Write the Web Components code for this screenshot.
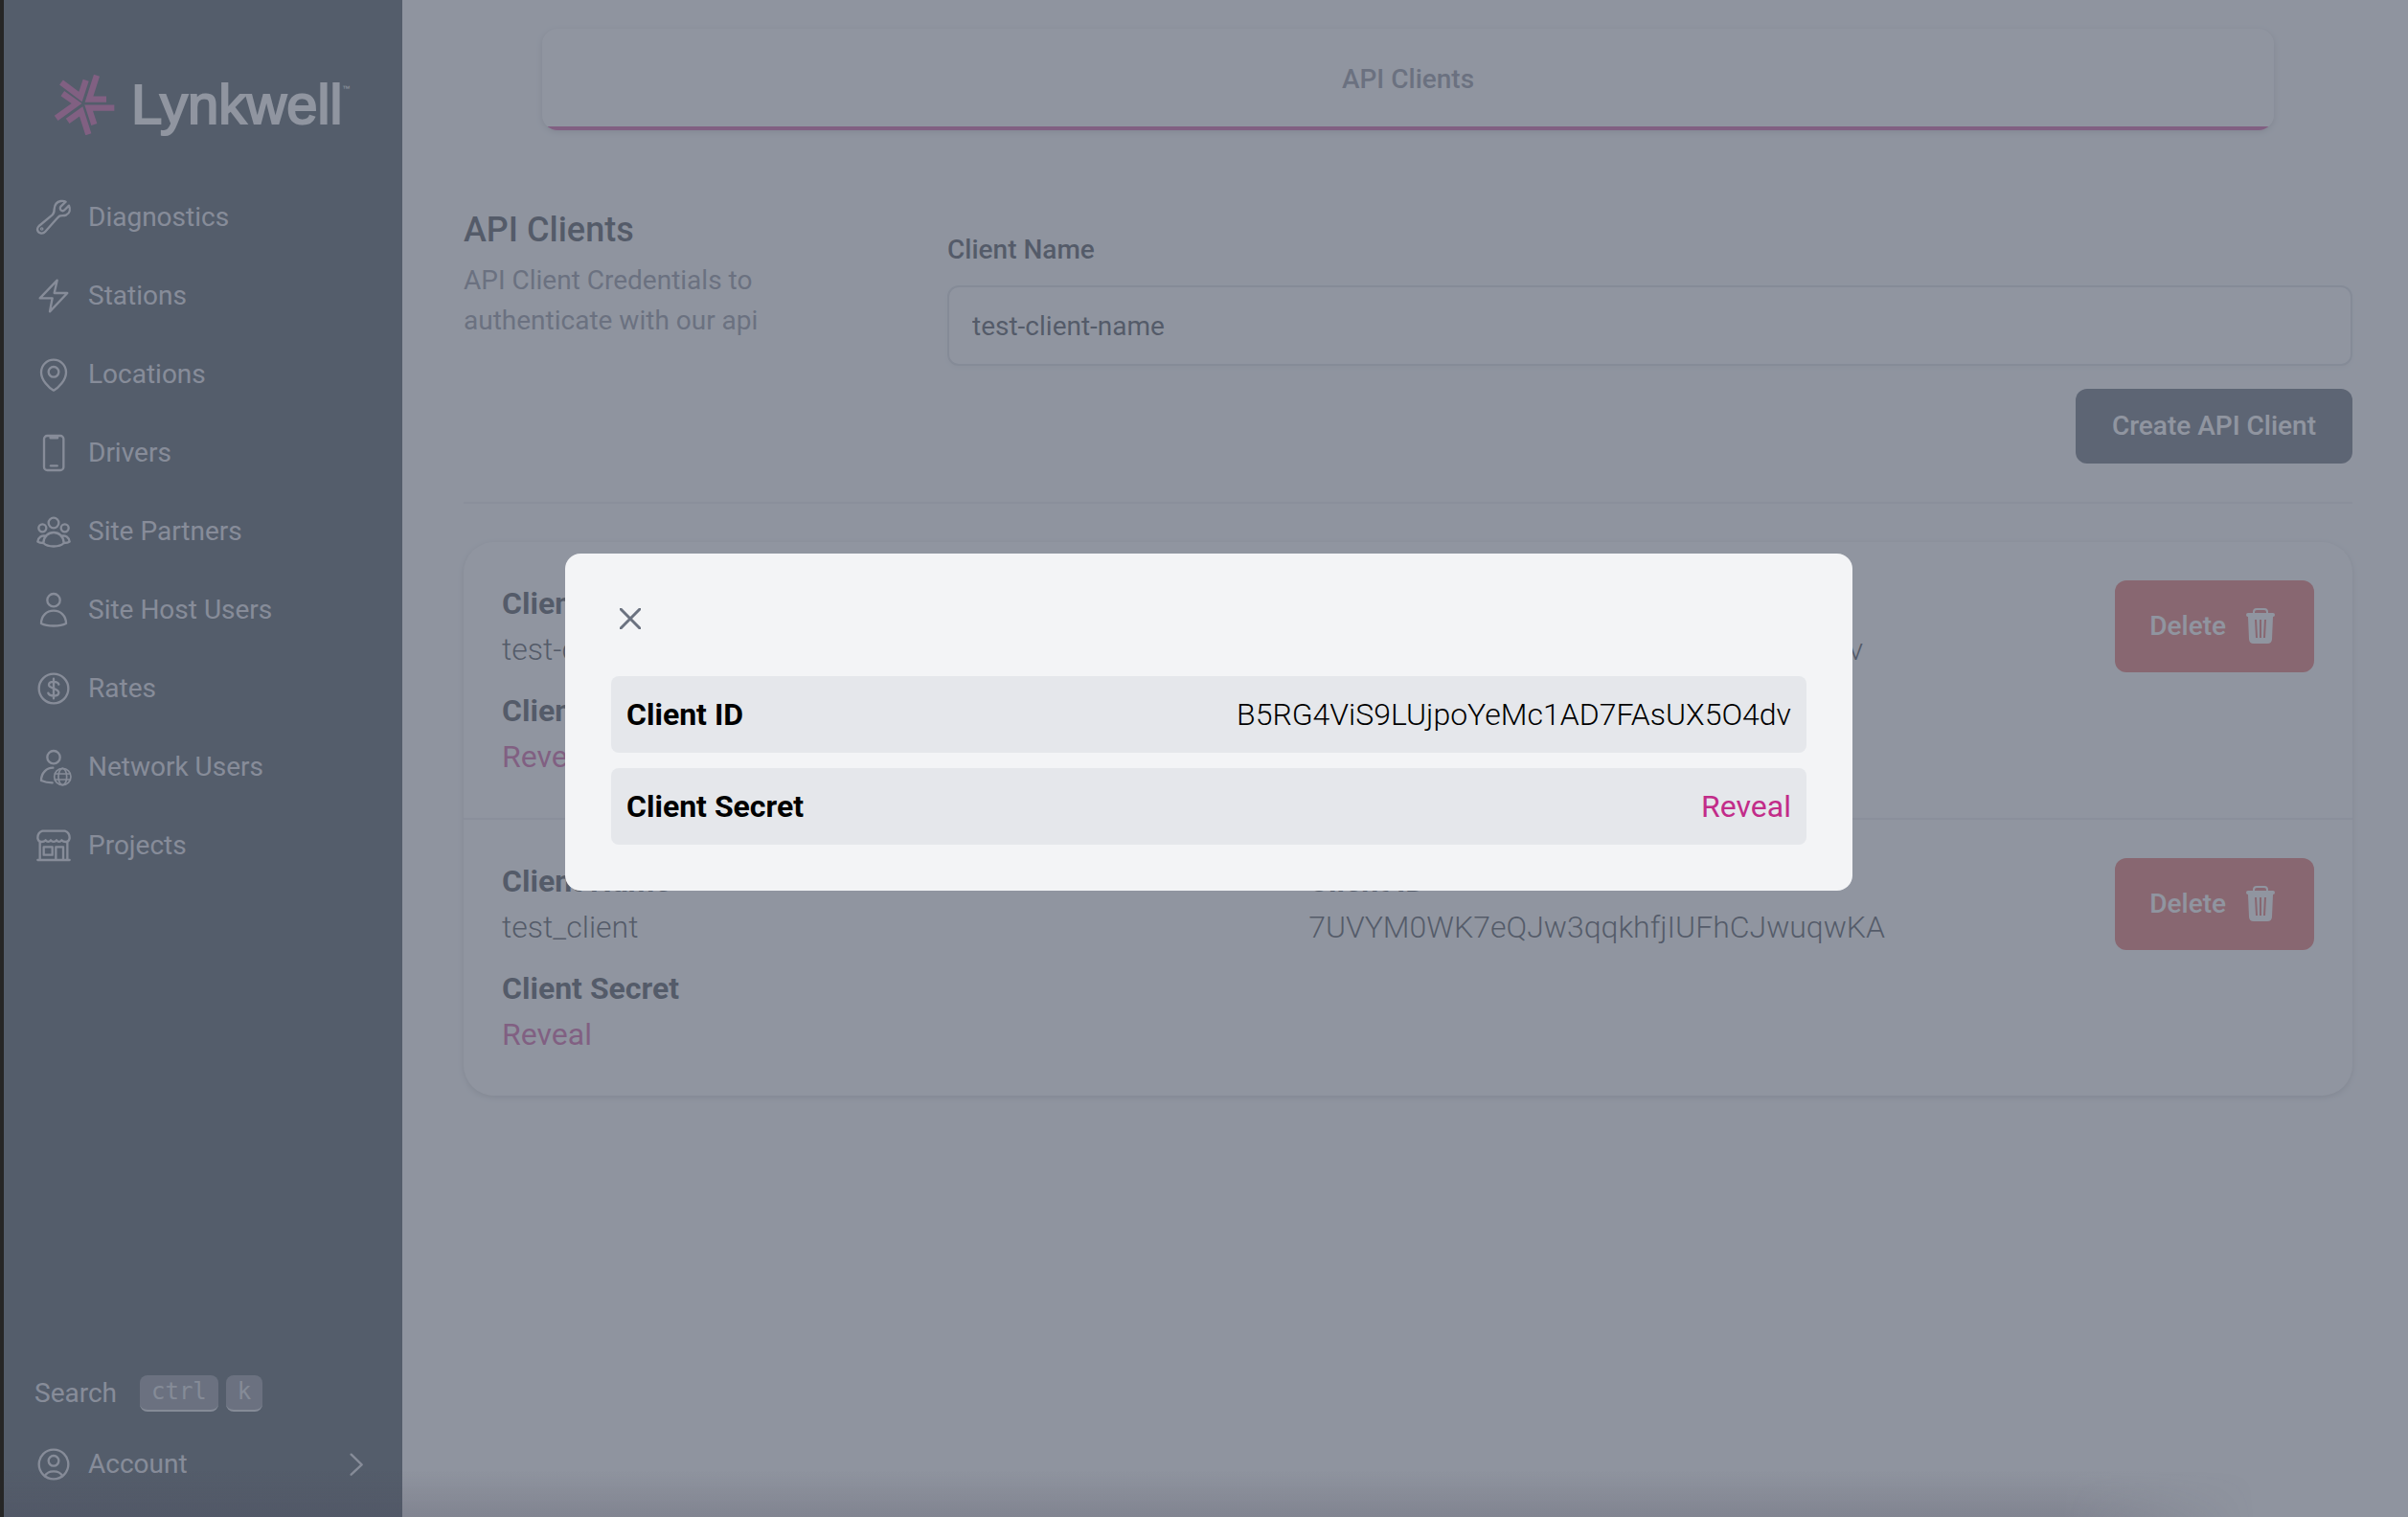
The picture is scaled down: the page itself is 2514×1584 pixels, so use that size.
<!DOCTYPE html>
<html lang="en">
<head>
<meta charset="utf-8">
<title>API Clients</title>
<style>
  html, body {
    margin: 0;
    height: 100%;
  }
  body {
    --ink: #111827;
    --muted: #6b7280;
    --pink: #c22c89;
    font-family: Roboto, "Noto Sans", sans-serif;
    font-size: 28px;
    line-height: 42px;
    color: var(--ink);
  }
</style>
</head>
<body>
<app-shell>
  <side-nav slot="nav"></side-nav>
  <tab-bar>API Clients</tab-bar>
  <client-form></client-form>
  <client-list>
    <client-row name="test-client-name" client-id="B5RG4ViS9LUjpoYeMc1AD7FAsUX5O4dv"></client-row>
    <client-row name="test_client" client-id="7UVYM0WK7eQJw3qqkhfjIUFhCJwuqwKA"></client-row>
  </client-list>
  <modal-dialog slot="overlay">
    <detail-row label="Client ID">B5RG4ViS9LUjpoYeMc1AD7FAsUX5O4dv</detail-row>
    <detail-row label="Client Secret"><reveal-button></reveal-button></detail-row>
  </modal-dialog>
</app-shell>

<script>
function define(name, html, setup) {
  const tmpl = document.createElement('template');
  tmpl.innerHTML = html;
  window.customElements.define(name, class extends HTMLElement {
    constructor() {
      super();
      this.attachShadow({mode: 'open'}).appendChild(tmpl.content.cloneNode(true));
    }
    connectedCallback() {
      if (setup) setup(this, this.shadowRoot);
    }
  });
}

// all icons share a 120 unit grid
const icons = {
  wrench: '<path d="M14 87 56 52C62 47 62 41 62 34 63 20 70 11 82 9 88 8 93 8 98 11L83 25C79 29 80 36 84 38 88 41 92 39 95 36L108 23C113 34 111 46 100 52 92 56 84 53 78 56 75 58 73 60 70 64L34 104C26 114 9 110 9 97 9 92 11 90 14 87Z"/><circle cx="23" cy="96" r="2"/>',
  bolt: '<path d="M71 11 17 67H56L48 109 103 51H62Z"/>',
  pin: '<path d="M60 110C45 102 21 78 21 53a39 39 0 0 1 78 0C99 78 75 102 60 110Z"/><circle cx="60" cy="52" r="16"/>',
  phone: '<rect x="30" y="6" width="61" height="108" rx="10"/><path d="M50 7h22v6h-22z"/><path d="M51 100h20"/>',
  partners: '<circle cx="60" cy="33" r="16"/><circle cx="25" cy="49" r="12"/><circle cx="95" cy="49" r="12"/><path d="M28 96C29 75 43 63 60 63S91 75 92 96C78 110 42 110 28 96ZM37 74C23 70 11 79 10 92 14 95 20 96 28 96M83 74C97 70 109 79 110 92 106 95 100 96 92 96"/>',
  user: '<circle cx="60" cy="29" r="20"/><path d="M21 102C21 78 38 62 60 62s39 16 39 40C80 112 40 112 21 102Z"/>',
  dollar: '<circle cx="60" cy="60" r="46"/><path d="M60 29v62M76 47C73 37 46 35 45 48 45 61 76 58 76 73 75 86 46 85 43 74"/>',
  network: '<circle cx="60" cy="29" r="20"/><path d="M58 62C38 62 21 78 21 102 32 107 44 109 56 109"/><g stroke-width="5"><circle cx="88" cy="90" r="26"/><ellipse cx="88" cy="90" rx="13" ry="26"/><path d="M64 81h48M64 99h48"/></g>',
  store: '<path d="M25 14H95C105 17 110 26 110 36 109 44 105 48 98 48 91 48 87 45 85 43 81 49 73 49 69 43 65 49 55 49 51 43 47 49 39 49 35 43 33 45 29 48 22 48 15 48 11 44 10 36 10 26 15 17 25 14ZM10 105H110M17 48V105M103 48V105M67 105V64H90V105"/><rect x="29" y="64" width="27" height="25"/>',
  account: '<circle cx="60" cy="60" r="46"/><circle cx="60" cy="49" r="16"/><path d="M32 97C42 77 78 77 88 97"/>',
  chevron: '<path d="M44 29 77 61 44 92"/>'
};

define('nav-icon', `
  <style>
    :host { display: block; width: 40px; height: 40px; }
    svg {
      display: block;
      width: 100%;
      height: 100%;
      fill: none;
      stroke: currentColor;
      stroke-width: 7;
      stroke-linecap: round;
      stroke-linejoin: round;
      overflow: visible;
    }
  </style>
  <svg viewBox="0 0 120 120" aria-hidden="true"></svg>
`, (el, root) => {
  root.querySelector('svg').innerHTML = icons[el.getAttribute('name')];
});

define('brand-logo', `
  <style>
    :host { display: flex; align-items: center; gap: 17px; color: #fff; }
    svg { width: 64px; height: 64px; flex: none; stroke: var(--pink); fill: none; stroke-width: 19; }
    .word {
      display: flex;
      font: 58px/62px "Liberation Sans", sans-serif;
      -webkit-text-stroke: 2px #fff;
    }
    sup { font-size: 8px; line-height: 30px; -webkit-text-stroke: 0; }
  </style>
  <svg viewBox="168 112 192 192" aria-hidden="true">
    <path d="M192 139 252 184 269 132"/>
    <path d="M303 117 279 192H333"/>
    <path d="M358 219H278L295 271"/>
    <path d="M277 302 254 230 212 260"/>
    <path d="M176 251 240 205 196 174"/>
  </svg>
  <span class="word">Lynkwell<sup>™</sup></span>
`);

define('nav-item', `
  <style>
    :host { display: block; }
    a {
      display: flex;
      align-items: center;
      gap: 16px;
      height: 82px;
      color: inherit;
      text-decoration: none;
    }
    span { flex: 1; }
  </style>
  <a href="#"><nav-icon></nav-icon><span><slot></slot></span><slot name="end"></slot></a>
`, (el, root) => {
  const icon = root.querySelector('nav-icon');
  icon.setAttribute('name', el.getAttribute('icon'));
  icon.connectedCallback();
});

define('key-cap', `
  <style>
    :host { display: block; }
    kbd {
      display: block;
      box-sizing: border-box;
      height: 38px;
      padding: 0 12px;
      border-radius: 8px;
      border-bottom: 2px solid #d1d5db;
      background: #6b7280;
      font: 24px/34px "DejaVu Sans Mono", monospace;
      color: #d1d5db;
    }
  </style>
  <kbd><slot></slot></kbd>
`);

define('side-nav', `
  <style>
    :host {
      display: flex;
      flex-direction: column;
      box-sizing: border-box;
      padding: 77px 28px 14px 32px;
      background: #10222c;
      color: #d9dce1;
    }
    brand-logo { padding: 0 20px 45px; }
    nav { flex: 1; }
    .search { display: flex; align-items: center; gap: 8px; height: 62px; padding-bottom: 2px; }
    .search span { margin-right: 16px; }
  </style>
  <brand-logo></brand-logo>
  <nav>
    <nav-item icon="wrench">Diagnostics</nav-item>
    <nav-item icon="bolt">Stations</nav-item>
    <nav-item icon="pin">Locations</nav-item>
    <nav-item icon="phone">Drivers</nav-item>
    <nav-item icon="partners">Site Partners</nav-item>
    <nav-item icon="user">Site Host Users</nav-item>
    <nav-item icon="dollar">Rates</nav-item>
    <nav-item icon="network">Network Users</nav-item>
    <nav-item icon="store">Projects</nav-item>
  </nav>
  <div class="search"><span>Search</span><key-cap>ctrl</key-cap><key-cap>k</key-cap></div>
  <nav-item icon="account">Account<nav-icon slot="end" name="chevron"></nav-icon></nav-item>
`);

define('tab-bar', `
  <style>
    :host { display: block; padding: 0 82px; }
    nav {
      border-radius: 16px;
      overflow: hidden;
      background: #fff;
      box-shadow: 0 2px 6px rgba(0, 0, 0, .2);
    }
    a {
      display: block;
      padding: 32px 0 28px;
      border-bottom: 4px solid var(--pink);
      text-align: center;
      font-weight: 500;
      color: var(--muted);
      text-decoration: none;
    }
  </style>
  <nav><a href="#" aria-current="page"><slot></slot></a></nav>
`);

define('client-form', `
  <style>
    :host {
      display: grid;
      grid-template-columns: 457px 1fr;
      gap: 48px;
      padding: 80px 0 40px;
      border-bottom: 2px solid #e5e7eb;
    }
    h2 { margin: 0 0 8px; font-size: 36px; line-height: 48px; font-weight: 500; }
    p { margin: 0; max-width: 340px; color: var(--muted); }
    form { display: flex; flex-direction: column; padding-top: 24px; }
    label { font-weight: 500; margin-bottom: 16px; }
    input {
      box-sizing: border-box;
      width: 100%;
      height: 84px;
      padding: 0 24px;
      border: 2px solid #d1d5db;
      border-radius: 12px;
      background: #fff;
      box-shadow: 0 2px 4px rgba(0, 0, 0, .05);
      font: inherit;
      color: inherit;
    }
    button {
      align-self: flex-end;
      height: 78px;
      margin-top: 24px;
      padding: 0 38px;
      border: 0;
      border-radius: 12px;
      background: #374151;
      color: #fff;
      font: inherit;
      font-weight: 500;
    }
  </style>
  <div>
    <h2>API Clients</h2>
    <p>API Client Credentials to authenticate with our api</p>
  </div>
  <form>
    <label for="name">Client Name</label>
    <input id="name" type="text" value="test-client-name">
    <button type="button">Create API Client</button>
  </form>
`);

define('client-list', `
  <style>
    :host {
      display: block;
      margin-top: 40px;
      border-radius: 32px;
      background: #fff;
      box-shadow: 0 2px 6px rgba(0, 0, 0, .2);
    }
    ::slotted(:not(:last-child)) { border-bottom: 2px solid #e5e7eb; }
  </style>
  <slot></slot>
`);

define('reveal-button', `
  <style>
    :host { display: inline-block; font-weight: 400; }
    button { padding: 0; border: 0; background: none; font: inherit; color: var(--pink); }
  </style>
  <button type="button">Reveal</button>
`);

define('client-row', `
  <style>
    :host { display: flex; align-items: flex-start; padding: 40px; font-size: 32px; line-height: 48px; }
    dl { flex: 1; display: grid; grid-template-columns: 1fr 1fr; row-gap: 16px; margin: 0; }
    dt { font-weight: 700; }
    dd { margin: 0; font-weight: 300; }
    .delete {
      display: flex;
      align-items: center;
      gap: 16px;
      height: 96px;
      padding: 0 36px;
      border: 0;
      border-radius: 12px;
      background: #e04a44;
      color: #fff;
      font: inherit;
      font-size: 28px;
      font-weight: 500;
    }
    svg { width: 40px; height: 40px; fill: currentColor; }
  </style>
  <dl>
    <div><dt>Client Name</dt><dd id="name"></dd></div>
    <div><dt>Client ID</dt><dd id="id"></dd></div>
    <div><dt>Client Secret</dt><dd><reveal-button></reveal-button></dd></div>
  </dl>
  <button class="delete" type="button">Delete
    <svg viewBox="0 0 40 40" aria-hidden="true">
      <path d="M13 7V5q0-3 3-3h8q3 0 3 3v2" fill="none" stroke="currentColor" stroke-width="2"/>
      <path fill-rule="evenodd" d="M7 6h26q2 0 2 2t-2 2l-1 23q0 5-5 5H13q-5 0-5-5L7 10Q5 10 5 8t2-2ZM14 13l1 19h2l-1-19ZM19 13v19h2V13ZM24 13l-1 19h2l1-19Z"/>
    </svg>
  </button>
`, (el, root) => {
  root.getElementById('name').textContent = el.getAttribute('name');
  root.getElementById('id').textContent = el.getAttribute('client-id');
});

define('detail-row', `
  <style>
    :host {
      display: flex;
      justify-content: space-between;
      align-items: center;
      padding: 16px;
      border-radius: 8px;
      background: #e5e7eb;
      line-height: 48px;
    }
    span { font-weight: 300; }
  </style>
  <strong></strong>
  <span><slot></slot></span>
`, (el, root) => {
  root.querySelector('strong').textContent = el.getAttribute('label');
});

define('modal-dialog', `
  <style>
    :host {
      position: absolute;
      inset: 0;
      box-sizing: border-box;
      padding: 578px 0 0 6px;
      background: rgba(107, 114, 128, .75);
      font-size: 32px;
      color: #000;
    }
    .panel {
      box-sizing: border-box;
      max-width: 1344px;
      margin: 0 auto;
      padding: 48px;
      border-radius: 16px;
      background: #f3f4f6;
    }
    .rows { display: flex; flex-direction: column; gap: 16px; }
    button {
      display: grid;
      place-items: center;
      width: 40px;
      height: 40px;
      margin-bottom: 40px;
      padding: 0;
      border: 0;
      background: none;
      color: var(--muted);
    }
    svg { width: 22px; height: 22px; stroke: currentColor; stroke-width: 3; stroke-linecap: round; }
  </style>
  <div class="panel" role="dialog" aria-modal="true">
    <button type="button" aria-label="Close">
      <svg viewBox="0 0 22 22"><path d="M1 1 21 21M21 1 1 21"/></svg>
    </button>
    <div class="rows"><slot></slot></div>
  </div>
`);

define('app-shell', `
  <style>
    :host {
      position: relative;
      display: grid;
      grid-template-columns: 416px 1fr;
      box-sizing: border-box;
      min-height: 100vh;
      border-left: 4px solid #262626;
      background: #f9fafb;
    }
    main { padding: 30px 58px 64px 64px; }
    .fade {
      position: absolute;
      left: 0;
      right: 160px;
      bottom: 0;
      height: 48px;
      background: linear-gradient(transparent, rgba(74, 70, 88, .2));
      -webkit-mask-image: linear-gradient(to left, transparent, #000 200px);
      pointer-events: none;
    }
  </style>
  <slot name="nav"></slot>
  <main><slot></slot></main>
  <slot name="overlay"></slot>
  <div class="fade"></div>
`);
</script>
</body>
</html>
